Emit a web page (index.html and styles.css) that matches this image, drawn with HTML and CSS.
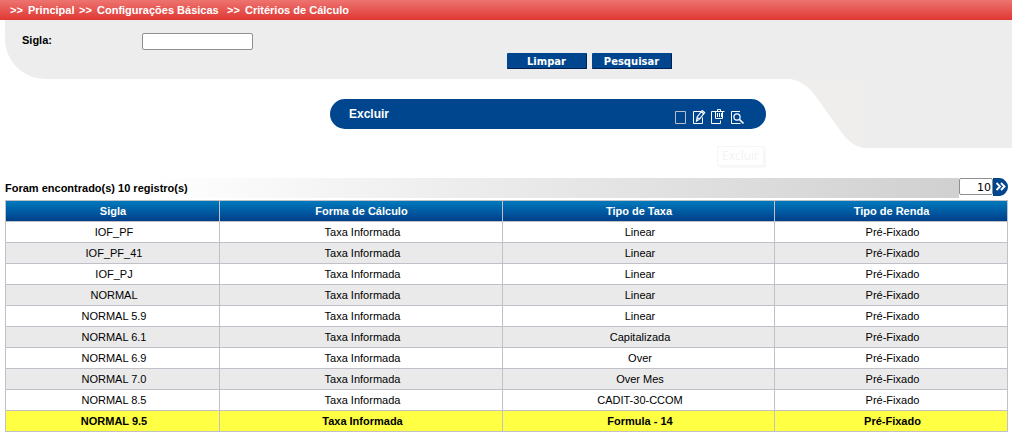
FILE: index.html
```html
<!DOCTYPE html>
<html lang="pt-BR">
<head>
<meta charset="utf-8">
<title>Critérios de Cálculo</title>
<link rel="stylesheet" href="styles.css">
</head>
<body>
<nav class="breadcrumb">
  <span class="sep">&gt;&gt;</span><span class="c1">Principal</span><span class="sep">&gt;&gt;</span><span class="c2">Configurações Básicas</span><span class="sep">&gt;&gt;</span><span class="c3">Critérios de Cálculo</span>
</nav>
<form class="search">
  <label class="field-label" for="sigla">Sigla:</label>
  <input class="field" id="sigla" type="text">
  <div class="buttons">
    <button class="btn" type="button">Limpar</button>
    <button class="btn" type="button">Pesquisar</button>
  </div>
</form>
<section class="actions">
  <div class="action-area">
    <div class="pill">
      <span class="pill-title">Excluir</span>
      <svg class="icons" width="72" height="16" viewBox="0 0 72 16" fill="none" stroke="#fff">
        <path stroke="#b9bec6" d="M1.500 2.500h10v12h-10z"/>
        <path d="M27 2.500h-7.500v12h9v-6"/>
        <path stroke-width="1.200" d="M22.500 12l.7-4 5-6.500 2.500 2-5.200 6.500zM23 8.500l2.500 1.500M27.500 3l2.500 2"/>
        <path d="M40 2.500h-2.500v12h9v-3M39.500 2.500h11M43.500 2V.5h3V2M41.500 3v6.500h7V3M43.500 4v4M45.500 4v4M47.500 4v4"/>
        <path d="M66 2.500h-8.500v12h9"/><circle cx="63" cy="8" r="3.100" stroke-width="1.200"/><path stroke-width="1.700" d="M65.500 10.500l4 4"/>
      </svg>
    </div>
    <span class="ghost">Excluir</span>
  </div>
  <svg class="curve" width="232" height="69" viewBox="0 0 232 69">
    <defs><linearGradient id="tail"><stop offset="0" stop-color="#efeeec"/><stop offset=".35" stop-color="#efeeec"/><stop offset=".4" stop-color="#ededed"/></linearGradient></defs>
    <path fill="url(#tail)" d="M0 0H10C20 1 30 9 34 15L62 54C67 61 74 67 83 69H232V0Z"/>
  </svg>
</section>
<div class="summary">
  <span class="count">Foram encontrado(s) 10 registro(s)</span>
  <input class="page-size" type="text" value="10">
  <svg class="go" width="15" height="18" viewBox="0 0 15 18"><path fill="#00468e" d="M0 0h7q3 0 5.500 3Q15 5.500 15 9t-2.500 6Q10 18 7 18H0z"/><path fill="none" stroke="#fff" stroke-width="1.900" d="M3.500 5l3.500 3.500L3.500 12M8 5l3.500 3.500L8 12"/></svg>
</div>
<div class="table">
  <div class="row head"><span>Sigla</span><span>Forma de Cálculo</span><span>Tipo de Taxa</span><span>Tipo de Renda</span></div>
  <div class="row"><span>IOF_PF</span><span>Taxa Informada</span><span>Linear</span><span>Pré-Fixado</span></div>
  <div class="row alt"><span>IOF_PF_41</span><span>Taxa Informada</span><span>Linear</span><span>Pré-Fixado</span></div>
  <div class="row"><span>IOF_PJ</span><span>Taxa Informada</span><span>Linear</span><span>Pré-Fixado</span></div>
  <div class="row alt"><span>NORMAL</span><span>Taxa Informada</span><span>Linear</span><span>Pré-Fixado</span></div>
  <div class="row"><span>NORMAL 5.9</span><span>Taxa Informada</span><span>Linear</span><span>Pré-Fixado</span></div>
  <div class="row alt"><span>NORMAL 6.1</span><span>Taxa Informada</span><span>Capitalizada</span><span>Pré-Fixado</span></div>
  <div class="row"><span>NORMAL 6.9</span><span>Taxa Informada</span><span>Over</span><span>Pré-Fixado</span></div>
  <div class="row alt"><span>NORMAL 7.0</span><span>Taxa Informada</span><span>Over Mes</span><span>Pré-Fixado</span></div>
  <div class="row"><span>NORMAL 8.5</span><span>Taxa Informada</span><span>CADIT-30-CCOM</span><span>Pré-Fixado</span></div>
  <div class="row selected"><span>NORMAL 9.5</span><span>Taxa Informada</span><span>Formula - 14</span><span>Pré-Fixado</span></div>
</div>
</body>
</html>
```
FILE: styles.css
```css
* { box-sizing: border-box; }
body { margin: 0; background: #fff; color: #000; font: 11px/20px "Liberation Sans", Arial, sans-serif; overflow: hidden; }
.breadcrumb { display: flex; height: 20px; padding-left: 10px; background: linear-gradient(#ed7470, #e03733); color: #fff; font-weight: bold; white-space: nowrap; }
.sep { width: 18px; }
.c1 { width: 51px; }
.c2 { width: 130px; }
.search { display: flex; height: 59px; margin-left: 5px; background: #ededed; border-bottom-left-radius: 40px 40px; }
.field-label { width: 120px; margin-left: 17px; line-height: 41px; font-weight: bold; }
.field { width: 111px; height: 17px; margin-top: 13px; border: 1px solid #8f8f8f; border-radius: 2px; background: #fff; }
.buttons { display: flex; gap: 5px; margin: 33px 0 0 254px; }
.btn { width: 80px; height: 16px; padding: 2px 0 0; border: 0; border-right: 1px solid #001f50; border-bottom: 1px solid #001f50; border-radius: 1px; background: #00468e; color: #fff; font: bold 10px/13px "DejaVu Sans", Verdana, sans-serif; }
.actions { display: flex; height: 99px; }
.action-area { display: flex; flex-direction: column; width: 780px; padding: 20px 14px 0 330px; }
.pill { display: flex; align-items: flex-start; justify-content: space-between; height: 30px; padding: 5px 20px 0 19px; border-radius: 15px; background: #00468e; color: #fff; }
.pill-title { font-size: 12px; font-weight: bold; }
.icons { margin-top: 5px; }
.ghost { width: 47px; height: 20px; margin: 17px 0 0 387px; border: 1px solid #f6f6f6; box-shadow: 2px 2px 2px #f8f8f8; color: #f3f3f3; font: 12px/18px "Open Sans", sans-serif; text-align: center; }
.curve { display: block; }
.summary { display: flex; height: 18px; margin-left: 5px; }
.count { width: 954px; height: 20px; background: linear-gradient(90deg, #fff 0, #fff 15%, #d0d0d0); font-weight: bold; }
.page-size { width: 34px; height: 17px; padding: 2px 1px 0; border: 1px solid #8f8f8f; border-radius: 2px; font: 11px "DejaVu Sans", Verdana, sans-serif; text-align: right; }
.table { width: 1003px; margin: 4px 0 0 5px; padding: 1px; background: #c0c0c8; display: grid; gap: 1px; }
.row { display: grid; grid-template-columns: 213px 282px 271px 232px; gap: 1px; height: 20px; text-align: center; }
.row span { background: #fff; padding-left: 3px; }
.row.alt span { background: #eaeaea; }
.row.head span { background: linear-gradient(#0079bd, #003f89); color: #fff; font-weight: bold; padding-left: 1px; }
.row.selected span { background: #ffff43; font-weight: bold; }
```
